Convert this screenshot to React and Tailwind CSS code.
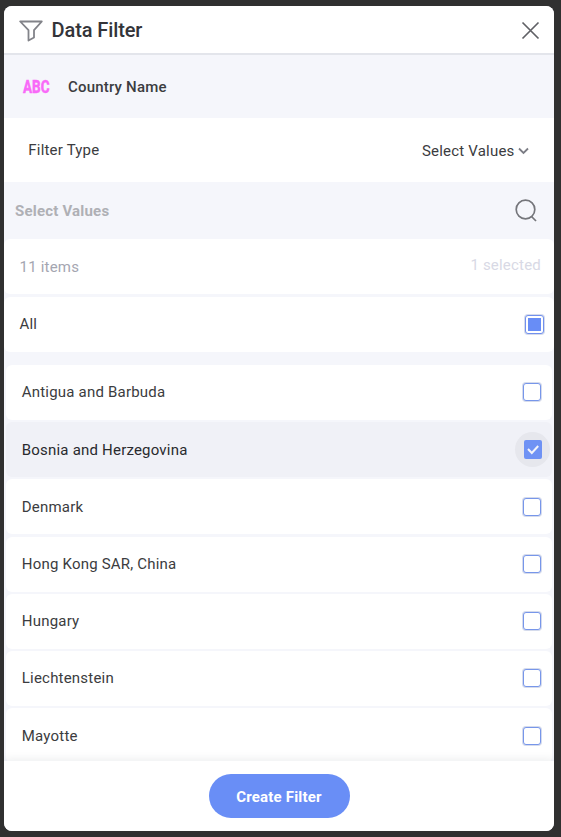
const countries = [
  { name: 'Antigua and Barbuda' },
  { name: 'Bosnia and Herzegovina', checked: true },
  { name: 'Denmark' },
  { name: 'Hong Kong SAR, China' },
  { name: 'Hungary' },
  { name: 'Liechtenstein' },
  { name: 'Mayotte' },
];

function FunnelIcon() {
  return (
    <svg className="h-[22px] w-6" viewBox="0 0 24 22" fill="none" stroke="#828389" strokeWidth="1.8" strokeLinejoin="round">
      <path d="M1.2 1.500H22.800L15 10.200V17.500L9.500 20.500V10.200Z" />
    </svg>
  );
}

function Checkbox({ checked }) {
  if (!checked) {
    return <span className="size-[18px] rounded-[3px] border border-[#7796ea] bg-white shadow-[0_0_0_1px_#d5dbec]" />;
  }
  return (
    <span className="-mr-[9px] flex size-[35px] items-center justify-center rounded-full bg-[#e6e7ed]">
      <span className="flex h-[19px] w-[18px] items-center justify-center rounded-[2px] bg-[#6f92f4]">
        <svg className="size-[14px]" viewBox="0 0 14 14" fill="none" stroke="#f3f4fa" strokeWidth="2">
          <path d="M2 6L5.800 10L12.200 3" />
        </svg>
      </span>
    </span>
  );
}

export default function App() {
  return (
    <div className="h-[837px] w-[561px] overflow-hidden bg-[#303030] pt-1.5 pl-1 font-['Roboto',sans-serif] text-[15px] leading-5 tracking-[0.2px] text-[#3b3c40]">
      <div className="flex h-[825px] w-[550px] flex-col overflow-hidden rounded-[8px] bg-[#f5f6fb]">
        <header className="flex h-[49px] shrink-0 items-center border-b-2 border-[#e3e5eb] bg-white pr-[14px] pl-[15px]">
          <div className="pt-0.5"><FunnelIcon /></div>
          <h1 className="ml-[8.5px] flex-1 text-[20px] leading-6 font-medium tracking-[-0.1px] text-[#333439]">Data Filter</h1>
          <svg className="mt-0.5 size-[19px]" viewBox="0 0 19 19" fill="none" stroke="#606166" strokeWidth="1.7">
            <path d="M1.500 1.500L17.500 17.500M17.500 1.500L1.500 17.500" />
          </svg>
        </header>

        <section className="flex h-[63px] shrink-0 items-center pl-[19px]">
          <span className="w-7 text-[19px] leading-6 font-extrabold tracking-normal whitespace-nowrap text-[#f96af8]">
            <span className="inline-block origin-left scale-x-[0.71] [-webkit-text-stroke:0.4px_#f96af8]">ABC</span>
          </span>
          <span className="ml-[17px] font-medium">Country Name</span>
        </section>

        <section className="flex h-16 shrink-0 items-center justify-between bg-white pr-[25px] pl-[24.3px]">
          <span>Filter Type</span>
          <span className="flex items-center gap-[3.5px] pt-0.5">
            Select Values
            <svg className="-mt-px h-2 w-[11px]" viewBox="0 0 11 8" fill="none" stroke="#7c7d85" strokeWidth="1.8">
              <path d="M1 1.500L5.500 6L10 1.500" />
            </svg>
          </span>
        </section>

        <section className="flex h-[57px] shrink-0 items-center justify-between pr-[17px] pl-[11px]">
          <span className="font-bold text-[#afb0b5]">Select Values</span>
          <svg className="-mt-px h-6 w-[22px]" viewBox="0 0 22 24" fill="none" stroke="#75767b" strokeWidth="1.700">
            <circle cx="10.500" cy="11.500" r="9.300" />
            <path d="M16.500 18.500L21 23" />
          </svg>
        </section>

        <section className="flex h-[55px] shrink-0 items-center justify-between rounded-md bg-white pr-[13px] pl-[15.5px]">
          <span className="text-[#a4a6b1]">11 items</span>
          <span className="pb-1 text-[#d8d9e5]">1 selected</span>
        </section>

        <section className="mt-[3px] flex h-[55px] shrink-0 items-center justify-between rounded-md bg-white pr-[10px] pb-px pl-[15.5px]">
          <span>All</span>
          <span className="flex size-[19px] items-center justify-center rounded-[3px] border border-[#7190ed] bg-white shadow-[0_0_0_1px_#d5dbec]">
            <span className="size-[13px] bg-[#688df6]" />
          </span>
        </section>

        <ul className="mt-[13px] flex min-h-0 flex-1 flex-col gap-[2.2px] overflow-hidden px-0.5">
          {countries.map(({ name, checked }) => (
            <li
              key={name}
              className={`flex h-[55px] shrink-0 items-center justify-between rounded-md pr-[11px] pb-[0.2px] pl-[15.8px] ${checked ? 'bg-[#f0f1f7] text-[#292a2e]' : 'bg-white'}`}
            >
              <span>{name}</span>
              <Checkbox checked={checked} />
            </li>
          ))}
        </ul>

        <footer className="relative flex h-[70px] shrink-0 items-center justify-center bg-white shadow-[0_-2px_8px_rgba(40,45,65,0.08)]">
          <button className="h-11 w-[141px] rounded-full bg-[#698ef6] pt-0.5 text-[15px] font-bold text-white">Create Filter</button>
        </footer>
      </div>
    </div>
  );
}
